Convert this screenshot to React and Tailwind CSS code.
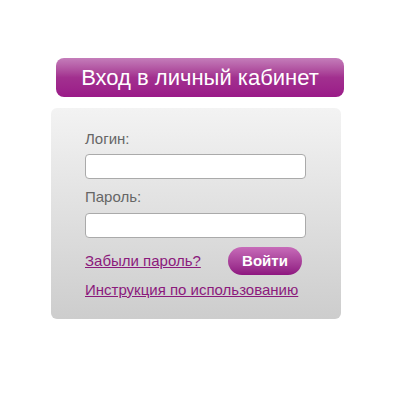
export default function App() {
  return (
    <div className="w-[400px] h-[400px] bg-white pt-[58px] font-['Liberation_Sans',Arial,sans-serif]">
      {/* Header button */}
      <div className="ml-[56px] w-[288px] h-[39px] rounded-[8px] bg-gradient-to-b from-[#c47dba] via-[#a2308f] to-[#9a1a88] flex items-center justify-center text-white text-[22px] leading-none">
        Вход в личный кабинет
      </div>

      {/* Panel */}
      <div className="ml-[51px] mt-[11px] w-[290px] h-[211px] rounded-[6px] bg-gradient-to-b from-[#f3f3f3] to-[#cdcdcd] pl-[34px] pt-[22px]">
        <div className="text-[15px] text-[#666] leading-[18px]">Логин:</div>
        <input
          type="text"
          className="mt-[6px] block w-[221px] h-[25px] bg-white border border-[#aaa] rounded-[4px]"
        />
        <div className="mt-[9px] text-[15px] text-[#666] leading-[18px]">Пароль:</div>
        <input
          type="password"
          className="mt-[7px] block w-[221px] h-[25px] bg-white border border-[#aaa] rounded-[4px]"
        />
        <div className="mt-[9px] flex items-center h-[28px]">
          <a href="#" className="text-[15px] text-[#8b1a7c] underline w-[143px]">
            Забыли пароль?
          </a>
          <button className="w-[74px] h-[28px] rounded-full bg-gradient-to-b from-[#c76bb9] to-[#8e1580] text-white font-bold text-[15px]">
            Войти
          </button>
        </div>
        <a href="#" className="mt-[6px] block text-[15px] text-[#8b1a7c] underline leading-[18px]">
          Инструкция по использованию
        </a>
      </div>
    </div>
  )
}
